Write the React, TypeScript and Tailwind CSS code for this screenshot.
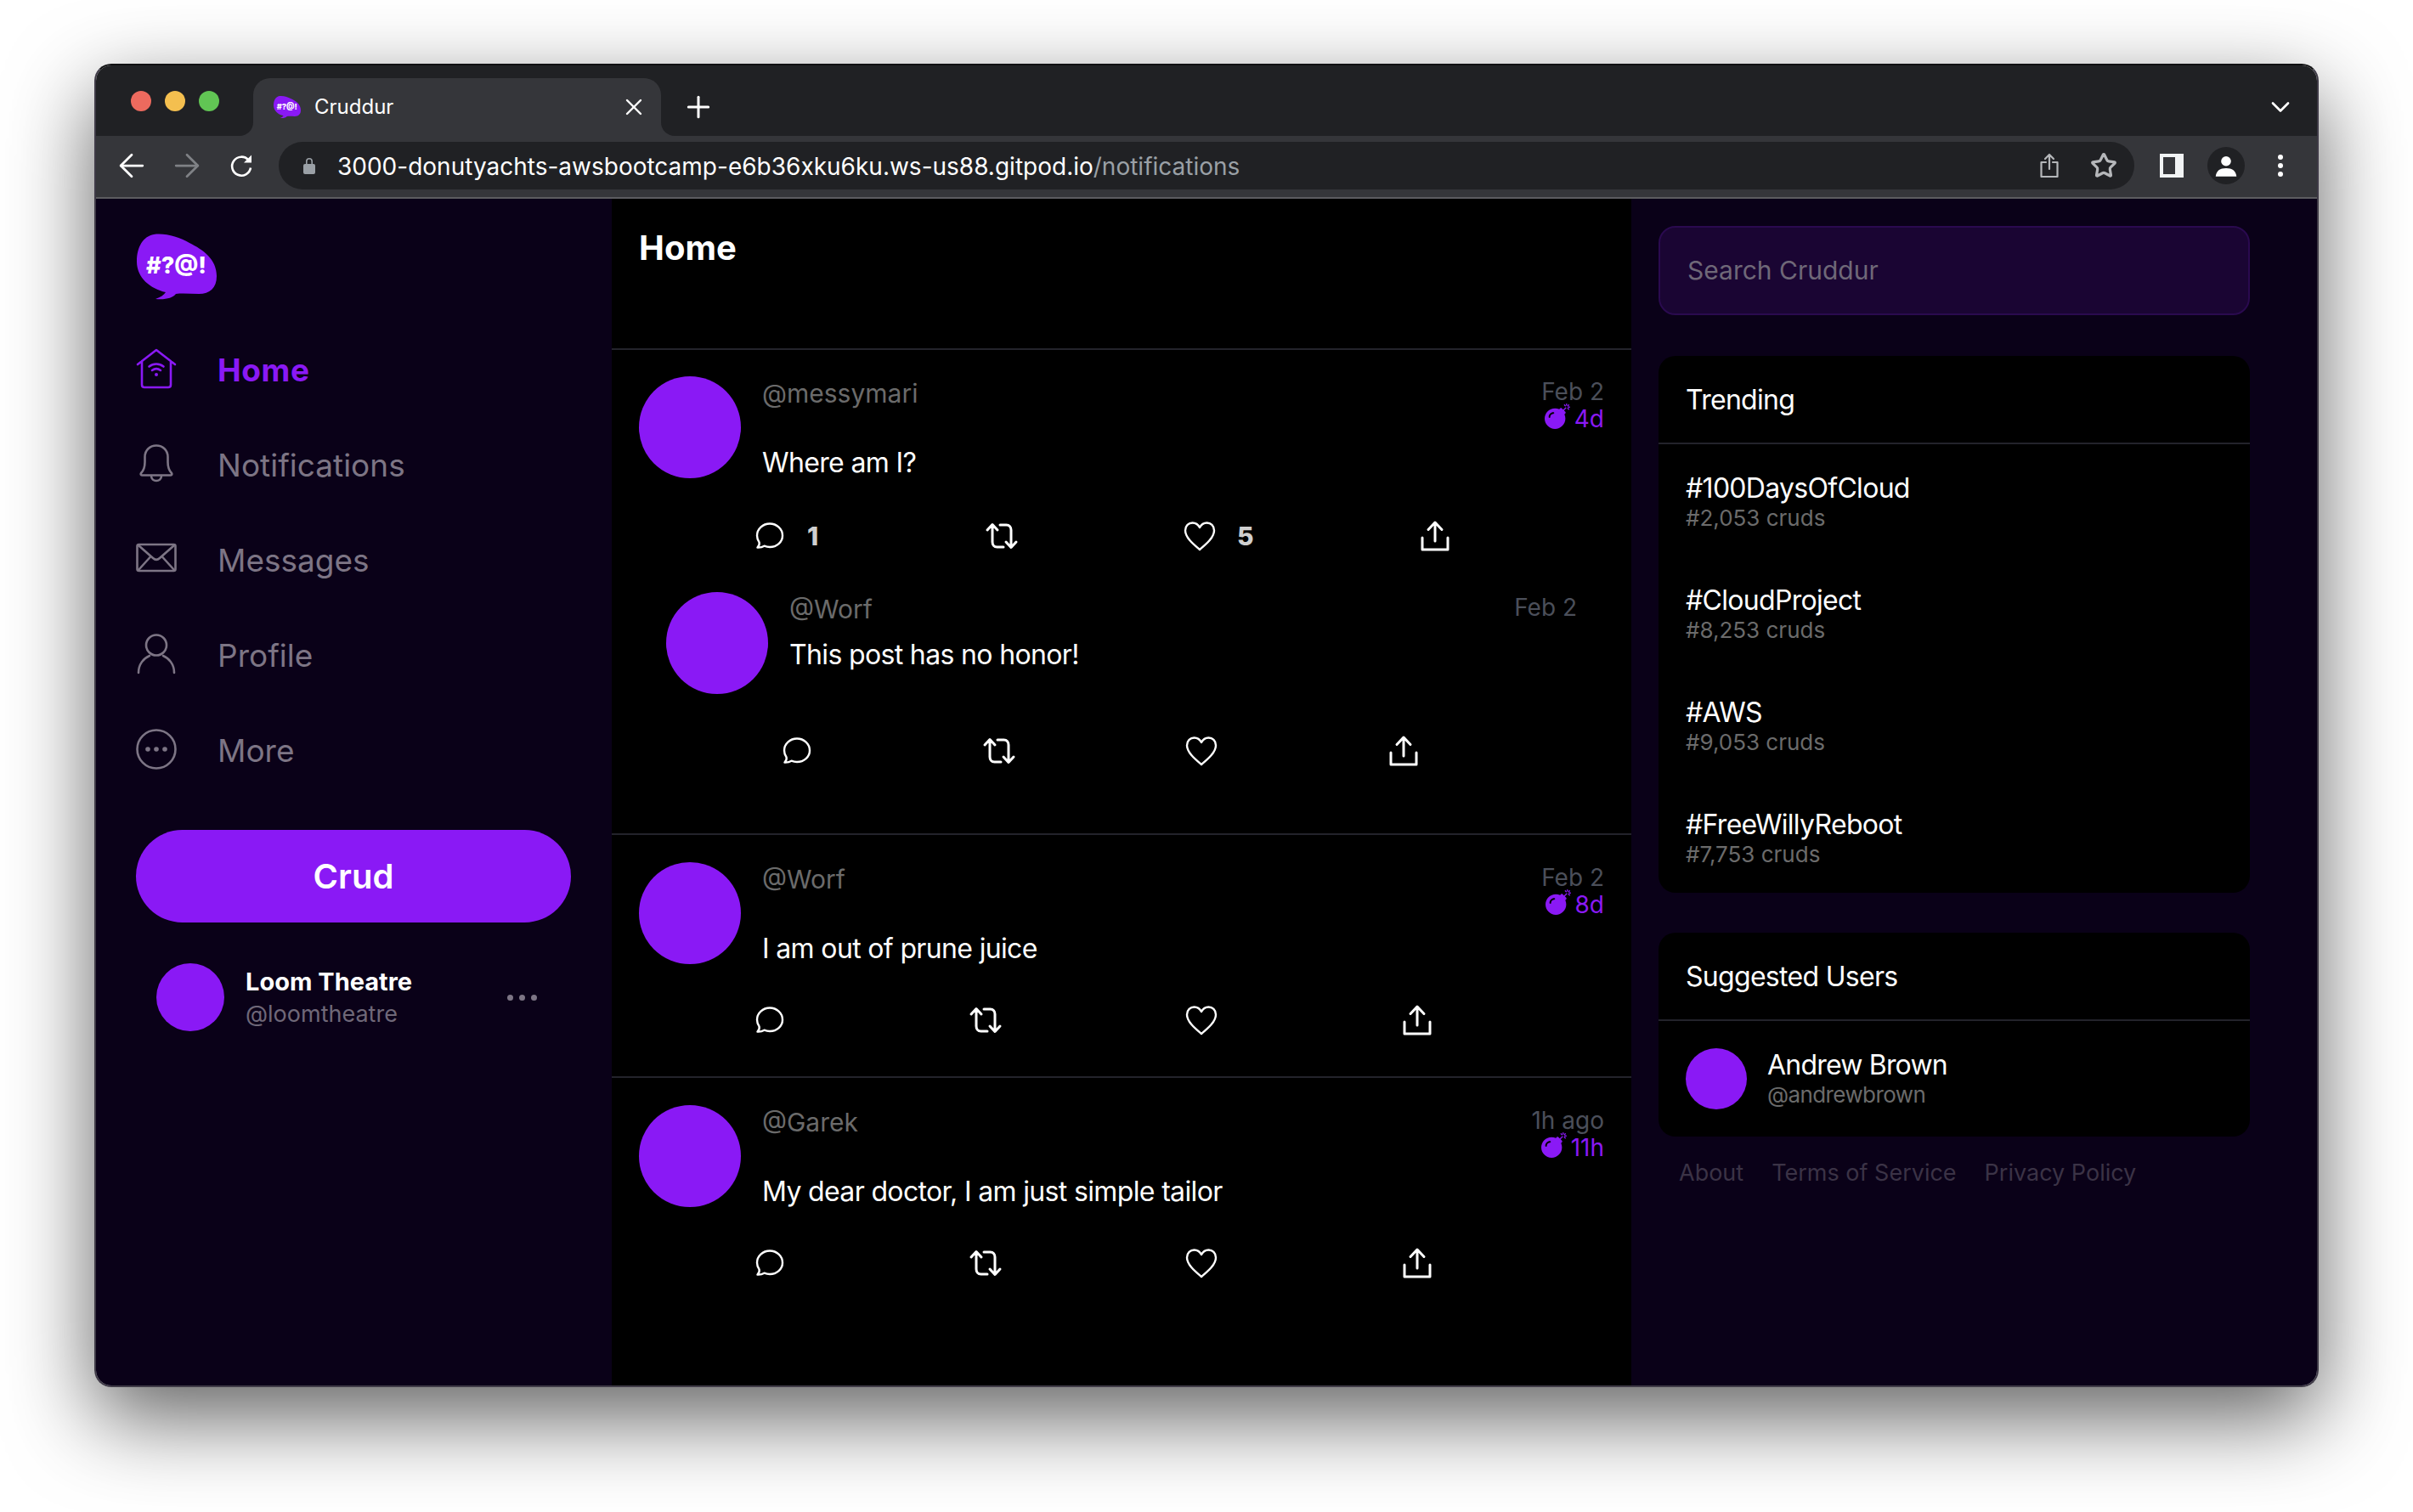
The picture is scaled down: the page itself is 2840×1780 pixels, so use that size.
import React from 'react';
import { ArrowLeft, ArrowRight, Star, X, Plus, ChevronDown } from 'lucide-react';
import { FaBomb } from 'react-icons/fa';

const Logo: React.FC<{ className?: string }> = ({ className }) => (
  <svg viewBox="0 0 94 78" className={className}>
    <path
      d="M20 1C33-1 50 4 62 11C78 19 94 30 94 50C94 64 86 71 73 71C64 71 54 70 46 71C42 76 34 78 22 77C28 75 32 72 34 69C16 65 0 52 0 33C0 15 8 3 20 1Z"
      fill="#8a19f5"
    />
    <text x="11" y="47" fontSize="27" fontWeight="800" fill="#fff" fontFamily="Inter, sans-serif" textLength="71" lengthAdjust="spacingAndGlyphs">
      #?@!
    </text>
  </svg>
);

const Bubble = () => (
  <svg viewBox="0 0 40 40" className="w-10 h-10" fill="none" stroke="currentColor" strokeWidth="2.4" strokeLinejoin="round">
    <path d="M20 5.5C28.3 5.5 35 11.8 35 19.5S28.3 33 20 33C17.6 33 15.5 32.5 13.5 31.7C11.5 33 8.8 33.8 5.5 33.6C7.4 31.6 8 29.2 7.6 27.5C5.9 25.2 5 22.5 5 19.5C5 11.8 11.7 5.5 20 5.5Z" />
  </svg>
);

const Repost = () => (
  <svg viewBox="0 0 40 40" className="w-10 h-10" fill="none" stroke="currentColor" strokeWidth="3" strokeLinecap="round" strokeLinejoin="round">
    <path d="M3 13L9 6.5L15 13M9 7V27C9 30.5 11 33 14.5 33H22M31 33V13C31 9.5 29 7 25.5 7H18M25 27L31 33.5L37 27" />
  </svg>
);

const Heart = () => (
  <svg viewBox="0 0 40 40" className="w-10 h-10" fill="none" stroke="currentColor" strokeWidth="2.4" strokeLinejoin="round">
    <path d="M20 36C13 30 3 22 3 13.5C3 8 7 4.5 11.5 4.5C15 4.5 18.2 6.5 20 10C21.8 6.5 25 4.5 28.5 4.5C33 4.5 37 8 37 13.5C37 22 27 30 20 36Z" />
  </svg>
);

const ShareIcon = () => (
  <svg viewBox="0 0 40 40" className="w-10 h-10" fill="none" stroke="currentColor" strokeWidth="3" strokeLinecap="round" strokeLinejoin="round">
    <path d="M20 26V5M12 12.5L20 4L28 12.5M5 22V36H35V22" />
  </svg>
);

type Action = { icon: React.ReactNode; count?: number };

const ActionRow: React.FC<{ cols: string; counts?: [number?, number?] }> = ({ cols, counts }) => {
  const actions: Action[] = [
    { icon: <Bubble />, count: counts?.[0] },
    { icon: <Repost /> },
    { icon: <Heart />, count: counts?.[1] },
    { icon: <ShareIcon /> },
  ];
  return (
    <div className={`grid ${cols} -ml-[11px] h-10 text-white`}>
      {actions.map((a, i) => (
        <div key={i} className="flex items-center gap-6">
          {a.icon}
          {a.count !== undefined && <span className="text-[30px] leading-none font-extrabold text-[#cfcfcf]">{a.count}</span>}
        </div>
      ))}
    </div>
  );
};

const Avatar: React.FC<{ className?: string }> = ({ className }) => (
  <div className={`rounded-full bg-[#8a19f5] shrink-0 ${className}`} />
);

const Crud: React.FC<{
  handle: string;
  message: string;
  date: string;
  left?: string;
  cols: string;
  counts?: [number?, number?];
  headH: string;
  msgGap: string;
}> = ({ handle, message, date, left, cols, counts, headH, msgGap }) => (
  <div className="flex gap-[25px]">
    <Avatar className="w-[120px] h-[120px]" />
    <div className="flex-1">
      <div className={`flex justify-between items-start ${headH}`}>
        <span className="text-[30px] leading-10 text-[#6b6b6b]">{handle}</span>
        <div className="pt-[2px] text-[28px] leading-8 text-right">
          <div className="text-[#4b4f5a]">{date}</div>
          {left && (
            <div className="flex items-center justify-end gap-[5px] text-[#8a19f5]">
              <FaBomb className="w-[30px] h-[30px] -translate-y-[3px]" />
              {left}
            </div>
          )}
        </div>
      </div>
      <p className={`text-[32px] leading-10 tracking-[-0.65px] text-white ${msgGap}`}>{message}</p>
      <ActionRow cols={cols} counts={counts} />
    </div>
  </div>
);

const navIcons: Record<string, React.ReactNode> = {
  Home: (
    <>
      <path d="M2 19L24 2L46 19M7 15V43C7 45 8 46 10 46H38C40 46 41 45 41 43V15" />
      <path d="M15.5 21.5C20.5 17.5 27.5 17.5 32.5 21.5M19 26C22 23.7 26 23.7 29 26" />
      <circle cx="24" cy="31" r="2" fill="currentColor" stroke="none" />
    </>
  ),
  Notifications: (
    <>
      <path d="M6 35C9 32 10.5 29 10.5 22V16C10.5 8 16.5 2.5 24 2.5S37.5 8 37.5 16V22C37.5 29 39 32 42 35C43 36.5 42 37.5 40.5 37.5H7.5C6 37.5 5 36.5 6 35Z" />
      <path d="M18 38C18 46 30 46 30 38" />
    </>
  ),
  Messages: (
    <>
      <rect x="1.5" y="7" width="45" height="31" rx="2" />
      <path d="M3 8L20 23C22.5 25.3 25.5 25.3 28 23L45 8M3 37L17.5 21M45 37L30.5 21" />
    </>
  ),
  Profile: (
    <>
      <circle cx="24" cy="13.5" r="12" />
      <path d="M3 46C3 36 9 29 16 26M45 46C45 36 39 29 32 26" />
    </>
  ),
  More: (
    <>
      <circle cx="24" cy="24" r="22.5" />
      <circle cx="14" cy="24" r="2.8" fill="currentColor" stroke="none" />
      <circle cx="24" cy="24" r="2.8" fill="currentColor" stroke="none" />
      <circle cx="34" cy="24" r="2.8" fill="currentColor" stroke="none" />
    </>
  ),
};

const Sidebar = () => (
  <nav className="w-[607px] shrink-0 bg-[#0a0118] pl-[47px] pr-[48px] pt-[41px]">
    <Logo className="ml-[1px] w-[94px] h-[78px]" />
    <div className="mt-[25px]">
      {Object.keys(navIcons).map((name) => (
        <div
          key={name}
          className={`h-[112px] flex items-center gap-12 text-[37px] ${name === 'Home' ? 'text-[#8a19f5] font-bold tracking-[0.6px]' : 'text-[#7d7585]'}`}
        >
          <svg viewBox="0 0 48 48" className="w-12 h-12" fill="none" stroke="currentColor" strokeWidth="2.6" strokeLinecap="round" strokeLinejoin="round">
            {navIcons[name]}
          </svg>
          <span className="pt-[3px]">{name}</span>
        </div>
      ))}
    </div>
    <button className="mt-[39px] w-full h-[109px] rounded-full bg-[#8a19f5] text-white text-[40px] font-semibold">Crud</button>
    <div className="mt-12 ml-6 flex items-center">
      <Avatar className="w-20 h-20" />
      <div className="ml-[25px] flex-1 pt-[2px]">
        <div className="text-[29px] leading-[38px] font-bold text-white">Loom Theatre</div>
        <div className="text-[27px] leading-[38px] text-[#6f6878]">@loomtheatre</div>
      </div>
      <div className="flex gap-[7px] mr-10">
        <span className="w-[7px] h-[7px] rounded-full bg-[#7d7585]" />
        <span className="w-[7px] h-[7px] rounded-full bg-[#7d7585]" />
        <span className="w-[7px] h-[7px] rounded-full bg-[#7d7585]" />
      </div>
    </div>
  </nav>
);

const Feed = () => (
  <main className="w-[1200px] shrink-0 bg-black">
    <div className="h-[178px] border-b-2 border-[#23232b] px-8 pt-[34px]">
      <h1 className="text-[40px] leading-[48px] font-bold text-white">Home</h1>
    </div>
    <section className="h-[571px] border-b-2 border-[#23232b] px-8 pt-[31px]">
      <Crud handle="@messymari" message="Where am I?" date="Feb 2" left="4d" cols="grid-cols-[273px_233px_277px_auto]" counts={[1, 5]} headH="h-[82px]" msgGap="mb-[46px]" />
      <div className="mt-[46px] pl-8 pr-8">
        <Crud handle="@Worf" message="This post has no honor!" date="Feb 2" cols="grid-cols-[238px_238px_238px_auto]" headH="h-[54px]" msgGap="mb-[73px]" />
      </div>
    </section>
    <section className="h-[286px] border-b-2 border-[#23232b] px-8 pt-8">
      <Crud handle="@Worf" message="I am out of prune juice" date="Feb 2" left="8d" cols="grid-cols-[254px_254px_254px_auto]" headH="h-[82px]" msgGap="mb-[44px]" />
    </section>
    <section className="px-8 pt-8">
      <Crud handle="@Garek" message="My dear doctor, I am just simple tailor" date="1h ago" left="11h" cols="grid-cols-[254px_254px_254px_auto]" headH="h-[82px]" msgGap="mb-[44px]" />
    </section>
  </main>
);

const trends = [
  ['#100DaysOfCloud', '#2,053 cruds'],
  ['#CloudProject', '#8,253 cruds'],
  ['#AWS', '#9,053 cruds'],
  ['#FreeWillyReboot', '#7,753 cruds'],
];

const CardTitle: React.FC<{ children: React.ReactNode }> = ({ children }) => (
  <div className="h-[104px] pt-[2px] border-b-2 border-[#23232b] px-8 flex items-center text-[32px] tracking-[-0.7px] text-white">{children}</div>
);

const Aside = () => (
  <aside className="flex-1 bg-[#0a0118] pl-8 pt-8">
    <div className="w-[696px]">
      <div className="h-[105px] rounded-[20px] bg-[#1a0533] border-2 border-[#2a0a4f] px-8 flex items-center text-[30px] text-[#6f6878]">
        Search Cruddur
      </div>
      <div className="mt-12 rounded-[20px] bg-black">
        <CardTitle>Trending</CardTitle>
        {trends.map(([name, count]) => (
          <div key={name} className="h-[132px] px-8 pt-[33px]">
            <div className="text-[32px] leading-[38px] tracking-[-0.7px] text-white">{name}</div>
            <div className="mt-[2px] text-[26px] leading-7 text-[#6b6b6b]">{count}</div>
          </div>
        ))}
      </div>
      <div className="mt-[47px] rounded-[20px] bg-black">
        <CardTitle>Suggested Users</CardTitle>
        <div className="h-[136px] px-8 flex items-center gap-6">
          <Avatar className="w-[72px] h-[72px]" />
          <div>
            <div className="text-[32px] leading-[38px] tracking-[-0.8px] text-white">Andrew Brown</div>
            <div className="text-[26px] leading-8 tracking-[-0.6px] text-[#6b6b6b]">@andrewbrown</div>
          </div>
        </div>
      </div>
      <div className="mt-[26px] pl-6 flex gap-[33px] text-[27px] leading-[34px] text-[#3b3346]">
        <span>About</span>
        <span>Terms of Service</span>
        <span>Privacy Policy</span>
      </div>
    </div>
  </aside>
);

const TabStrip = () => (
  <div className="h-[83px] flex items-end bg-[#202124] text-white">
    <div className="self-start mt-[30px] ml-[41px] flex gap-4">
      <span className="w-6 h-6 rounded-full bg-[#ed6a5e]" />
      <span className="w-6 h-6 rounded-full bg-[#f4bf4f]" />
      <span className="w-6 h-6 rounded-full bg-[#61c554]" />
    </div>
    <div className="relative ml-10 w-[480px] h-[68px] rounded-t-[20px] bg-[#35363a] flex items-center pl-6 pr-4 gap-4">
      <div className="absolute -left-4 bottom-0 w-4 h-4 bg-[#35363a]">
        <div className="w-4 h-4 bg-[#202124] rounded-br-2xl" />
      </div>
      <div className="absolute -right-4 bottom-0 w-4 h-4 bg-[#35363a]">
        <div className="w-4 h-4 bg-[#202124] rounded-bl-2xl" />
      </div>
      <Logo className="w-8 h-[28px]" />
      <span className="flex-1 text-[24px]">Cruddur</span>
      <X className="w-8 h-8" strokeWidth={1.8} />
    </div>
    <Plus className="ml-6 mb-[14px] w-10 h-10" strokeWidth={1.8} />
    <ChevronDown className="ml-auto mr-[25px] mb-4 w-9 h-9" strokeWidth={1.8} />
  </div>
);

const Toolbar = () => (
  <div className="h-[74px] pb-[2px] border-b-2 border-[#5c5c60] bg-[#35363a] flex items-center text-white">
    <ArrowLeft className="ml-5 w-11 h-11" strokeWidth={1.5} />
    <ArrowRight className="ml-[21px] w-11 h-11 text-[#7f8185]" strokeWidth={1.5} />
    <svg viewBox="0 0 32 32" className="ml-[26px] w-8 h-8">
      <path d="M24.5 9.5A11 11 0 1 0 27 18.5" fill="none" stroke="currentColor" strokeWidth="2.6" />
      <path d="M19 12.5H28V3.5Z" fill="currentColor" />
    </svg>
    <div className="ml-7 w-[2184px] h-14 rounded-full bg-[#202124] flex items-center pl-7 pr-5">
      <svg viewBox="0 0 16 20" className="w-4 h-5 text-[#9aa0a6]" fill="currentColor">
        <path d="M4 8V5a4 4 0 0 1 8 0v3h-1.6V5a2.4 2.4 0 0 0-4.8 0v3Z" />
        <rect x="1" y="8" width="14" height="12" rx="2" />
      </svg>
      <div className="ml-[25px] flex-1 pt-[2px] text-[28px] leading-none">
        3000-donutyachts-awsbootcamp-e6b36xku6ku.ws-us88.gitpod.io<span className="text-[#9aa0a6]">/notifications</span>
      </div>
      <svg viewBox="0 0 24 30" className="w-6 h-[30px] text-[#b5b7ba]" fill="none" stroke="currentColor" strokeWidth="2.2" strokeLinecap="round" strokeLinejoin="round">
        <path d="M12 19V2M7 7L12 2L17 7M8 11H2.5V28H21.5V11H16" />
      </svg>
      <Star className="ml-9 w-8 h-8 text-[#b5b7ba]" strokeWidth={2.4} />
    </div>
    <div className="ml-[30px] w-7 h-7 bg-[#f1f3f4] flex items-center pl-[4px]">
      <div className="w-[14px] h-5 bg-[#35363a]" />
    </div>
    <div className="ml-7 w-11 h-11 rounded-full bg-[#202124] flex items-center justify-center">
      <svg viewBox="0 0 24 24" className="w-7 h-7" fill="currentColor">
        <circle cx="12" cy="7.5" r="5" />
        <path d="M1.5 23C2 17 6 14.5 12 14.5S22 17 22.5 23Z" />
      </svg>
    </div>
    <div className="ml-[39px] flex flex-col gap-[4px]">
      <span className="w-[6px] h-[6px] rounded-full bg-white" />
      <span className="w-[6px] h-[6px] rounded-full bg-white" />
      <span className="w-[6px] h-[6px] rounded-full bg-white" />
    </div>
  </div>
);

export default function App() {
  return (
    <div className="w-[2840px] h-[1780px] bg-white pl-[111px] pt-[75px] overflow-hidden font-[Inter,sans-serif]">
      <div className="w-[2618px] h-[1558px] rounded-[20px] overflow-hidden border-2 border-[#3f3b47] border-t-[#111113] shadow-[0_36px_100px_rgba(0,0,0,0.62)] flex flex-col">
        <TabStrip />
        <Toolbar />
        <div className="flex flex-1 min-h-0">
          <Sidebar />
          <Feed />
          <Aside />
        </div>
      </div>
    </div>
  );
}
